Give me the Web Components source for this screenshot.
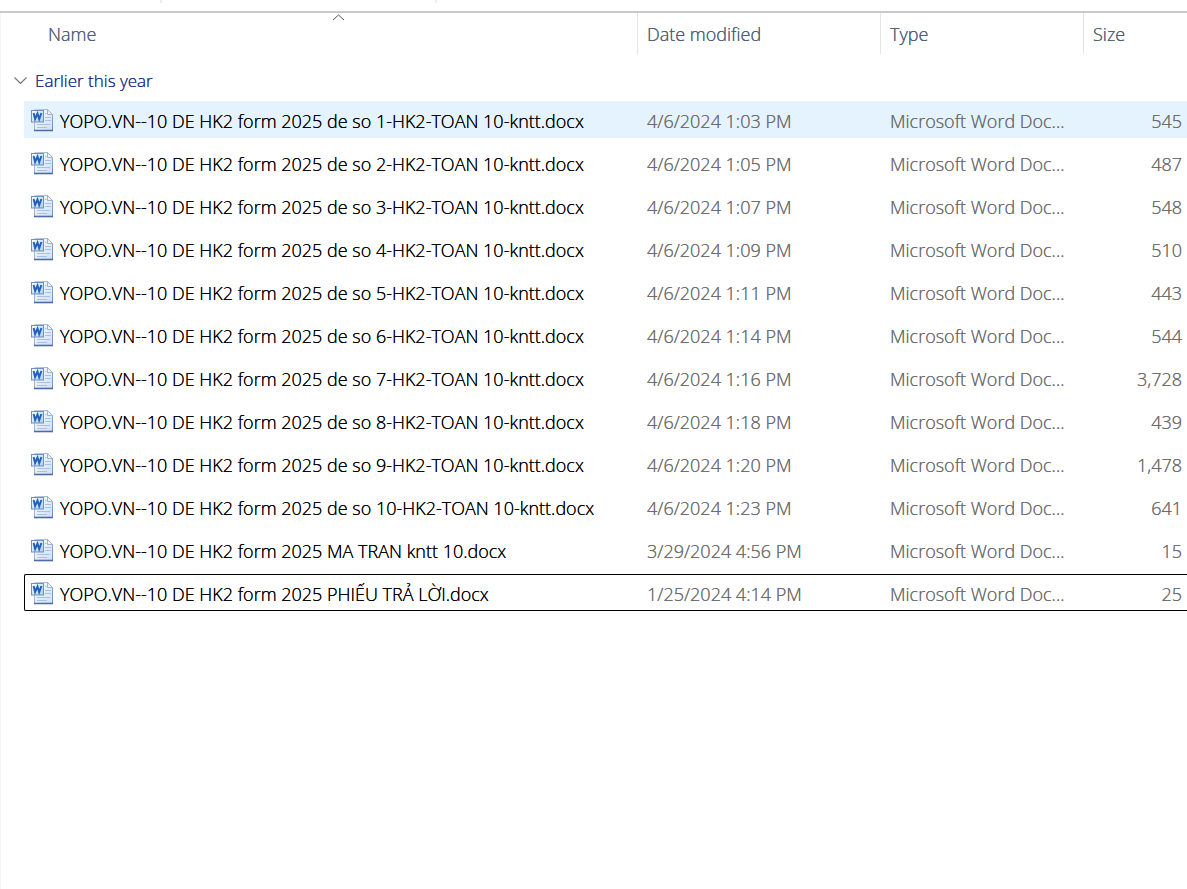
<!DOCTYPE html>
<html lang="en">
<head>
<meta charset="utf-8">
<title>Files</title>
<style>
  body { margin: 0; background: #fff; font-family: "Open Sans", "Noto Sans", sans-serif; }
</style>
</head>
<body>
<explorer-window>
  <tool-strip slot="tools"></tool-strip>
  <file-list></file-list>
</explorer-window>

<template id="window-template">
  <style>
    :host { display: flex; flex-direction: column; min-height: 100vh; overflow: hidden; }
    main { flex: 1; border-left: 1px solid #f5f5f6; }
  </style>
  <slot name="tools"></slot>
  <main><slot></slot></main>
</template>

<template id="strip-template">
  <style>
    :host { display: grid; grid-template-columns: 160px 275px 1fr; height: 11px; border-bottom: 2px solid #c8c8d0; }
    i { height: 3px; border-right: 2px solid #ececee; margin-right: -2px; }
    i:last-child { border: 0; margin: 0; }
  </style>
  <i></i><i></i><i></i>
</template>

<template id="icon-template">
  <style>
    :host { display: block; flex: none; width: 24px; height: 24px; }
    svg { display: block; }
  </style>
  <svg width="24" height="24" viewBox="0 0 24 24" aria-hidden="true">
    <defs>
      <linearGradient id="page" x1="0" y1="0" x2="1" y2="1"><stop offset="0" stop-color="#fbfdff"/><stop offset="1" stop-color="#cfdef4"/></linearGradient>
      <linearGradient id="badge" x1="0" y1="0" x2="1" y2="1"><stop offset="0" stop-color="#ffffff"/><stop offset="1" stop-color="#a9cdf5"/></linearGradient>
      <linearGradient id="edge" x1="0" y1="0" x2="1" y2="1"><stop offset="0" stop-color="#c3d0e4"/><stop offset="1" stop-color="#6d8dbd"/></linearGradient>
    </defs>
    <path d="M4.500 1.500h13l5 5v16h-18z" fill="url(#page)" stroke="url(#edge)"/>
    <path d="M4 22.500h19" stroke="#4c6ca5" stroke-width="1.600"/>
    <path d="M17.500 1.500v5h5z" fill="#eef4fc" stroke="#98acc9" stroke-width=".9"/>
    <path d="M15 5.500h1.500M15 9.500h6M15 12.500h6M7 16.500h13M7 19.500h10" stroke="#a9c0e4" stroke-width="1.200"/>
    <rect x="1.500" y="2.500" width="12" height="11.500" fill="url(#badge)" stroke="#6f8fc4"/>
    <path d="M3.600 5l1.500 6L7.500 5.500l1.700 5.500L11.400 5" fill="none" stroke="#1f62bd" stroke-width="2"/>
  </svg>
</template>

<template id="list-template">
  <style>
    :host { display: block; font-size: 18px; font-weight: 300; line-height: 26px; color: #6d6d6d; text-shadow: 0 0 0 currentColor; }
    table { width: 100%; table-layout: fixed; border-collapse: separate; border-spacing: 0 6px; margin-top: -6px; }
    .gutter { width: 23px; }
    .date { width: 243px; }
    .type { width: 203px; }
    .size { width: 104px; }
    th, td { padding: 0; font-weight: inherit; text-align: left; white-space: nowrap; box-sizing: border-box; text-shadow: 0 0 0 currentColor; }
    button { font: inherit; color: inherit; text-shadow: inherit; background: none; border: 0; padding: 0; cursor: pointer; text-align: left; display: flex; align-items: center; }
    thead th { height: 41px; color: #4c607a; border-left: 1px solid #e5e5e5; padding-left: 9px; position: relative; }
    thead th:first-child { border-left: 0; padding-left: 47px; }
    .sort { position: absolute; left: 331px; top: 1px; }
    .group th { height: 35px; font-size: 17px; color: #1e3287; padding: 6px 0 0 13px; }
    .group button { gap: 8px; }
    svg { display: block; flex: none; }
    .file td { height: 37px; border: 0 solid transparent; border-width: 1px 0; padding: 2px 0 0 10px; overflow: hidden; }
    .file td:first-child { border: 0; padding: 0; }
    .file .name { padding-left: 5px; border-left-width: 1px; color: #000; }
    .name div { display: flex; align-items: flex-start; gap: 6px; }
    .file .num { text-align: right; padding: 2px 5px 0 0; }
    .hover td:not(:first-child) { background: #e5f3ff; border-color: #e5f3ff; }
    .focus td:not(:first-child) { border-color: #000; }
    .hover .name, .focus .name { border-radius: 2px 0 0 2px; }
  </style>
  <table aria-label="Files">
    <colgroup><col class="gutter"><col><col class="date"><col class="type"><col class="size"></colgroup>
    <thead>
      <tr>
        <th scope="col" colspan="2" aria-sort="ascending"><button>Name</button><svg class="sort" width="13" height="7" viewBox="0 0 13 7" aria-hidden="true"><path d="M1 6l5.500-5L12 6" fill="none" stroke="#555"/></svg></th>
        <th scope="col"><button>Date modified</button></th>
        <th scope="col"><button>Type</button></th>
        <th scope="col"><button>Size</button></th>
      </tr>
    </thead>
    <tbody>
      <tr class="group"><th colspan="5" scope="rowgroup"><button aria-expanded="true"><svg width="13" height="8" viewBox="0 0 13 8" aria-hidden="true"><path d="M.5.500l6 6 6-6" fill="none" stroke="#777" stroke-width="1.200"/></svg>Earlier this year</button></th></tr>
    </tbody>
  </table>
</template>

<template id="row-template">
  <tr class="file"><td></td><td class="name"><div><word-icon></word-icon><span></span></div></td><td></td><td></td><td class="num"></td></tr>
</template>

<script>
  class TemplateElement extends HTMLElement {
    constructor() {
      super();
      const source = document.getElementById(this.constructor.template);
      this.attachShadow({ mode: "open" }).append(source.content.cloneNode(true));
    }
  }
  class ExplorerWindow extends TemplateElement { static template = "window-template"; }
  class ToolStrip extends TemplateElement { static template = "strip-template"; }
  class WordIcon extends TemplateElement { static template = "icon-template"; }

  const exam = n => `YOPO.VN--10 DE HK2 form 2025 de so ${n}-HK2-TOAN 10-kntt.docx`;
  const files = [
    [exam(1), "4/6/2024 1:03 PM", "545", "hover"],
    [exam(2), "4/6/2024 1:05 PM", "487"],
    [exam(3), "4/6/2024 1:07 PM", "548"],
    [exam(4), "4/6/2024 1:09 PM", "510"],
    [exam(5), "4/6/2024 1:11 PM", "443"],
    [exam(6), "4/6/2024 1:14 PM", "544"],
    [exam(7), "4/6/2024 1:16 PM", "3,728"],
    [exam(8), "4/6/2024 1:18 PM", "439"],
    [exam(9), "4/6/2024 1:20 PM", "1,478"],
    [exam(10), "4/6/2024 1:23 PM", "641"],
    ["YOPO.VN--10 DE HK2 form 2025 MA TRAN kntt 10.docx", "3/29/2024 4:56 PM", "15"],
    ["YOPO.VN--10 DE HK2 form 2025 PHIẾU TRẢ LỜI.docx", "1/25/2024 4:14 PM", "25", "focus"]
  ];

  class FileList extends TemplateElement {
    static template = "list-template";
    connectedCallback() {
      const body = this.shadowRoot.querySelector("tbody");
      const rowTemplate = document.getElementById("row-template");
      for (const [name, date, size, state] of files) {
        const row = rowTemplate.content.cloneNode(true).firstElementChild;
        if (state) row.classList.add(state);
        row.querySelector("span").textContent = name;
        row.cells[2].textContent = date;
        row.cells[3].textContent = "Microsoft Word Doc...";
        row.cells[4].textContent = size;
        body.append(row);
      }
    }
  }
  customElements.define("word-icon", WordIcon);
  customElements.define("tool-strip", ToolStrip);
  customElements.define("file-list", FileList);
  customElements.define("explorer-window", ExplorerWindow);
</script>
</body>
</html>
